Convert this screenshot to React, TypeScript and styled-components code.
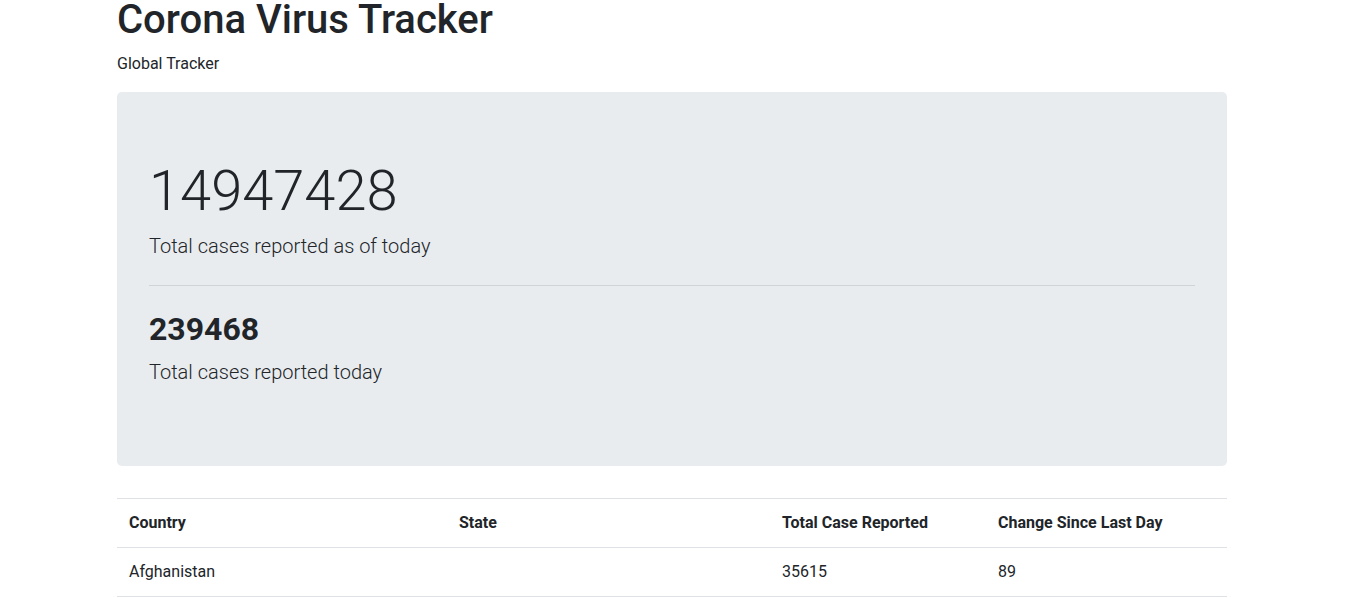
import React from "react"
import styled, { createGlobalStyle } from "styled-components"

const GlobalStyle = createGlobalStyle`
  *, *::before, *::after {
    box-sizing: border-box;
  }
  body {
    margin: 0 1px 0 0;
    font-family: Roboto, "Liberation Sans", sans-serif;
    font-size: 16px;
    line-height: 1.5;
    color: #212529;
    background: #fff;
  }
`

type Row = {
  country: string
  state: string
  total: number
  change: number
}

const rows: Row[] = [{ country: "Afghanistan", state: "", total: 35615, change: 89 }]

const columns = [
  { label: "Country", width: 330 },
  { label: "State", width: 323 },
  { label: "Total Case Reported", width: 216 },
  { label: "Change Since Last Day", width: 241 },
]

export default function App() {
  return (
    <>
      <GlobalStyle />
      <Container>
        <Title>Corona Virus Tracker</Title>
        <Subtitle>Global Tracker</Subtitle>
        <Jumbotron>
          <Display>14947428</Display>
          <Lead>Total cases reported as of today</Lead>
          <Divider />
          <TodayCount>239468</TodayCount>
          <Lead>Total cases reported today</Lead>
        </Jumbotron>
        <Table>
          <thead>
            <tr>
              {columns.map((c) => (
                <Th key={c.label} style={{ width: c.width }}>
                  {c.label}
                </Th>
              ))}
            </tr>
          </thead>
          <tbody>
            {rows.map((r) => (
              <tr key={r.country + r.state}>
                <Td>{r.country}</Td>
                <Td>{r.state}</Td>
                <Td>{r.total}</Td>
                <Td>{r.change}</Td>
              </tr>
            ))}
          </tbody>
        </Table>
      </Container>
    </>
  )
}

const Container = styled.div`
  width: 1140px;
  margin: 0 auto;
  padding: 0 15px;
`

const Title = styled.h1`
  margin: 0 0 12px;
  font-size: 40px;
  font-weight: 500;
  line-height: 40px;
`

const Subtitle = styled.p`
  margin: 0 0 16px;
`

const Jumbotron = styled.div`
  background-color: #e9ecef;
  border-radius: 4.8px;
  padding: 64px 32px 63px;
  margin-bottom: 32px;
`

const Display = styled.h1`
  margin: 0 0 6px;
  padding-top: 2px;
  font-size: 56px;
  font-weight: 300;
  line-height: 1.2;
`

const Lead = styled.p`
  margin: 0 0 16px;
  font-size: 20px;
  font-weight: 300;
`

const Divider = styled.hr`
  margin: 24px 0;
  border: 0;
  border-top: 1px solid rgba(0, 0, 0, 0.1);
`

const TodayCount = styled.h2`
  margin: 0 0 8px;
  font-size: 32px;
  font-weight: 700;
  line-height: 1.2;
`

const Table = styled.table`
  width: 100%;
  border-collapse: collapse;
  margin-bottom: 16px;
`

const Th = styled.th`
  padding: 12px;
  text-align: left;
  font-weight: 700;
  vertical-align: bottom;
  border-top: 1px solid #dee2e6;
`

const Td = styled.td`
  padding: 12px;
  vertical-align: top;
  border-top: 1px solid #dee2e6;
  border-bottom: 1px solid #dee2e6;
`
